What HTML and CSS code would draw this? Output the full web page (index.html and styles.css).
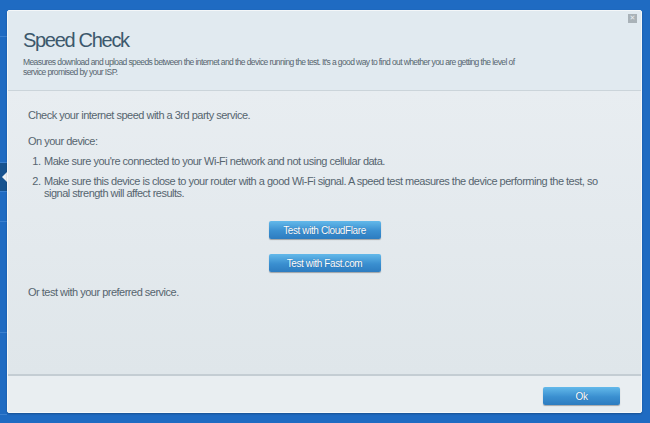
FILE: index.html
```html
<!DOCTYPE html>
<html>
	<head>
		<link rel="stylesheet" href="styles.css">
	</head>

	<body>
		<div class = "rail">
			<div class = "rail-item" style = "height: 37px"></div>
			<div class = "rail-item" style = "height: 126px"></div>
			<div class = "rail-item active"><span class = "notch"></span></div>
			<div class = "rail-item" style = "height: 30px"></div>
			<div class = "rail-item" style = "height: 111px"></div>
			<div class = "rail-item" style = "height: 82px"></div>
		</div>

		<div class = "stage">
			<div class = "modal">
				<span class = "close">&#10005;</span>

				<div class = "modal-header">
					<h1 class = "title">Speed Check</h1>
					<p class = "subtitle">Measures download and upload speeds between the internet and the device running the test. It's a good way to find out whether you are getting the level of service promised by your ISP.</p>
				</div>

				<div class = "modal-body">
					<p class = "intro">Check your internet speed with a 3rd party service.</p>
					<p class = "intro device">On your device:</p>
					<ol class = "steps">
						<li>Make sure you're connected to your Wi-Fi network and not using cellular data.</li>
						<li>Make sure this device is close to your router with a good Wi-Fi signal. A speed test measures the device performing the test, so signal strength will affect results.</li>
					</ol>

					<div class = "actions">
						<button class = "btn">Test with CloudFlare</button>
						<button class = "btn">Test with Fast.com</button>
					</div>

					<p class = "intro other">Or test with your preferred service.</p>
				</div>

				<div class = "modal-footer">
					<button class = "btn ok">Ok</button>
				</div>
			</div>
		</div>
	</body>
</html>
```

FILE: styles.css
```css
body {
	margin: 0;
	height: 423px;
	display: flex;
	background: #1f6bc2;
	font-family: "Liberation Sans", Arial, sans-serif;
	overflow: hidden;
}

.rail {
	width: 7px;
	display: flex;
	flex-direction: column;
}

.rail-item {
	border-bottom: 1px solid #3b80cf;
	box-sizing: border-box;
}

.rail-item.active {
	height: 29px;
	background: #17538f;
	display: flex;
	align-items: center;
	justify-content: flex-end;
}

.notch {
	width: 0;
	height: 0;
	border-top: 5px solid transparent;
	border-bottom: 5px solid transparent;
	border-right: 5px solid #eef2f5;
}

.stage {
	flex: 1;
	padding: 10px 8px 10px 0;
}

.modal {
	position: relative;
	height: 403px;
	box-sizing: border-box;
	display: flex;
	flex-direction: column;
	border: 1px solid #f4f7f9;
	border-radius: 2px;
	background: #e6ecf0;
	box-shadow: 0 1px 2px rgba(0, 0, 0, 0.25);
}

.close {
	position: absolute;
	top: 3px;
	right: 4px;
	width: 9px;
	height: 9px;
	background: #a9b2b8;
	color: #e8edf0;
	font-size: 7px;
	line-height: 9px;
	text-align: center;
	font-family: "DejaVu Sans", sans-serif;
}

.modal-header {
	height: 80px;
	box-sizing: border-box;
	padding: 17px 20px 0 15px;
	background: #e1eaf0;
	border-bottom: 1px solid #cbd4da;
}

.title {
	margin: 0;
	font-size: 20px;
	line-height: 24px;
	font-weight: normal;
	letter-spacing: -1.3px;
	color: #3c586c;
}

.subtitle {
	max-width: 505px;
	margin: 5px 0 0;
	font-size: 8.5px;
	line-height: 10px;
	letter-spacing: -0.6px;
	color: #56656f;
}

.modal-body {
	flex: 1;
	padding: 17px 20px 0 20px;
	background: linear-gradient(to bottom, #e8edf1, #dfe6ea);
}

.intro {
	margin: 0;
	font-size: 11px;
	line-height: 14px;
	letter-spacing: -0.5px;
	color: #56656f;
}

.device {
	margin-top: 12px;
}

.steps {
	max-width: 572px;
	margin: 7px 0 0;
	padding-left: 15px;
	font-size: 11px;
	line-height: 12px;
	letter-spacing: -0.5px;
	color: #56656f;
}

.steps li {
	padding-left: 1px;
}

.steps li + li {
	margin-top: 8px;
}

.actions {
	margin-top: 22px;
	display: flex;
	flex-direction: column;
	align-items: center;
	gap: 15px;
}

.btn {
	width: 112px;
	height: 18px;
	padding: 0;
	border: none;
	border-radius: 2px;
	background: linear-gradient(to bottom, #63b9ea, #3a8fd0 55%, #2d7cc0);
	box-shadow: 0 1px 1px rgba(0, 0, 0, 0.3);
	color: white;
	font-family: inherit;
	font-size: 10px;
	letter-spacing: -0.4px;
	text-shadow: 0 0 1px rgba(0, 40, 90, 0.5);
	cursor: pointer;
}

.other {
	margin-top: 13px;
}

.modal-footer {
	height: 38px;
	box-sizing: border-box;
	display: flex;
	justify-content: flex-end;
	align-items: flex-start;
	padding: 11px 21px 0 0;
	border-top: 2px solid #c4cdd3;
	background: #e9eef1;
}

.ok {
	width: 77px;
}
```
